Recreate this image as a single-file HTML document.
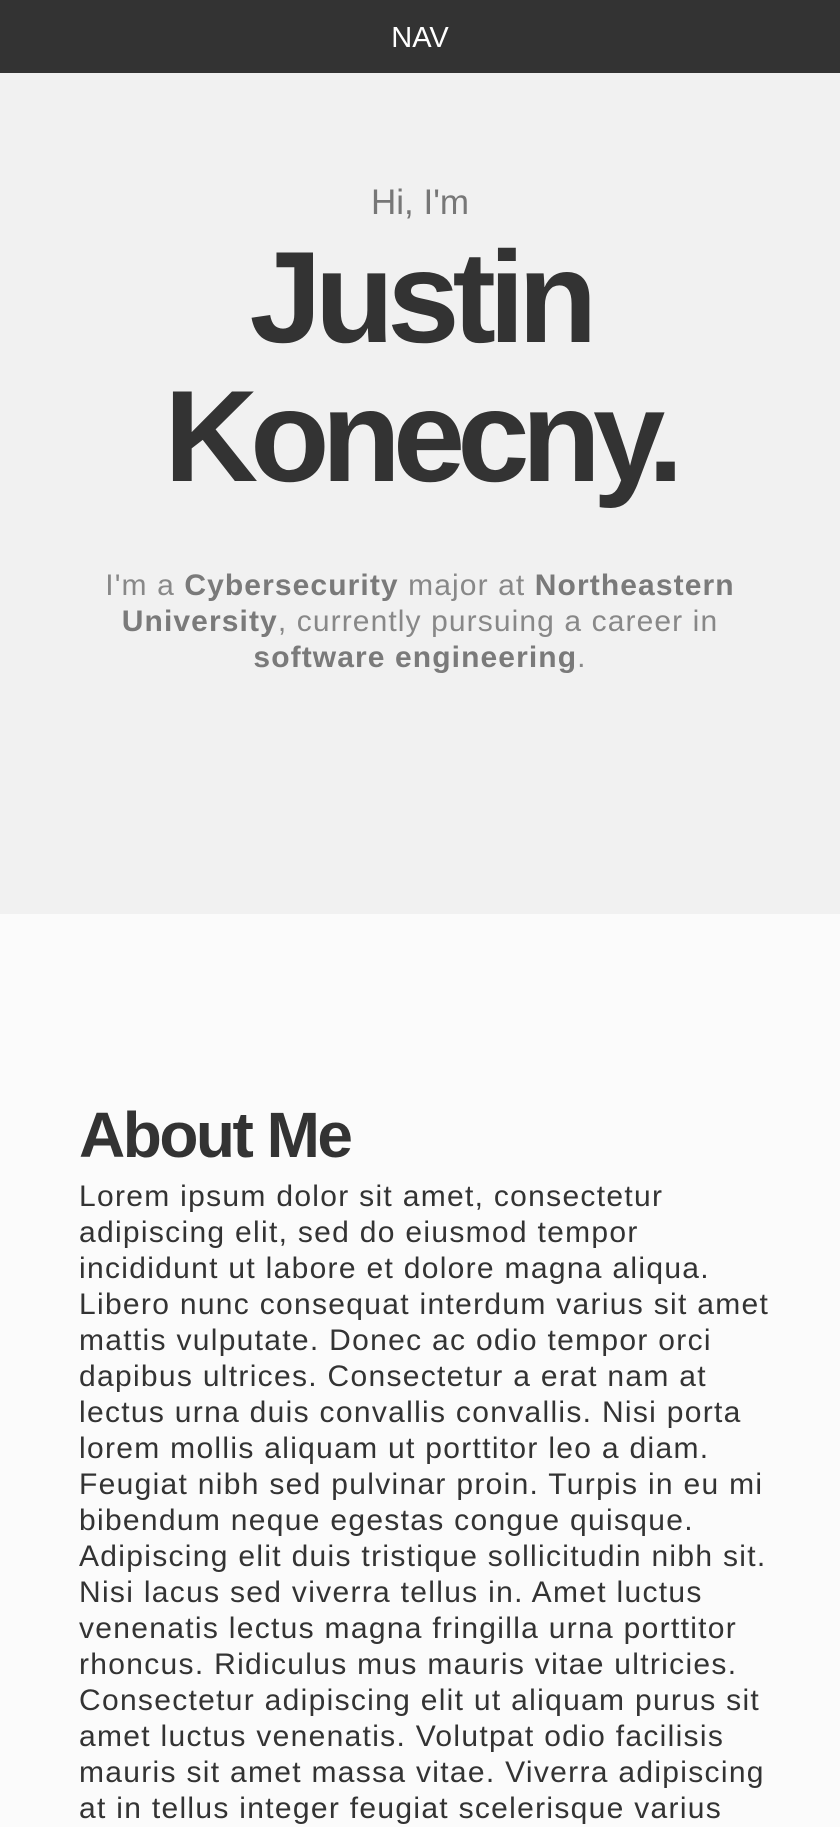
<!DOCTYPE html>
<html><head><meta charset="utf-8"><style>
*{margin:0;padding:0;box-sizing:border-box}
body{width:840px;height:1818px;overflow:hidden;background:#fbfbfb;font-family:"Liberation Sans",sans-serif;position:relative}
.nav{position:absolute;left:0;top:0;width:840px;height:73px;background:#333}
.a{position:absolute;left:0;width:840px;text-align:center;white-space:nowrap}
.hero{position:absolute;left:0;top:73px;width:840px;height:841px;background:#f1f1f1}
b{font-weight:bold;color:#7a7a7a}
.body{position:absolute;left:79px;top:1179px;font-size:30px;line-height:36px;color:#333;white-space:nowrap;letter-spacing:1.3px}
</style></head><body>
<div class="nav"></div>
<div class="a" style="top:24px;font-size:29px;line-height:29px;color:#fff">NAV</div>
<div class="hero"></div>
<div class="a" style="top:185px;font-size:35px;line-height:35px;color:#777">Hi, I'm</div>
<div class="a" style="top:232px;font-size:130px;line-height:130px;font-weight:bold;color:#333;letter-spacing:-7px">Justin</div>
<div class="a" style="top:371px;font-size:130px;line-height:130px;font-weight:bold;color:#333;letter-spacing:-8px">Konecny.</div>
<div class="a" style="top:568px;font-size:30px;line-height:36px;color:#888;letter-spacing:1.1px">I'm a <b>Cybersecurity</b> major at <b>Northeastern</b><br><b>University</b>, currently pursuing a career in<br><b>software engineering</b>.</div>
<div style="position:absolute;left:79px;top:1103px;font-size:64px;line-height:64px;font-weight:bold;color:#333;letter-spacing:-2.5px">About Me</div>
<div class="body">Lorem ipsum dolor sit amet, consectetur<br>adipiscing elit, sed do eiusmod tempor<br>incididunt ut labore et dolore magna aliqua.<br>Libero nunc consequat interdum varius sit amet<br>mattis vulputate. Donec ac odio tempor orci<br>dapibus ultrices. Consectetur a erat nam at<br>lectus urna duis convallis convallis. Nisi porta<br>lorem mollis aliquam ut porttitor leo a diam.<br>Feugiat nibh sed pulvinar proin. Turpis in eu mi<br>bibendum neque egestas congue quisque.<br>Adipiscing elit duis tristique sollicitudin nibh sit.<br>Nisi lacus sed viverra tellus in. Amet luctus<br>venenatis lectus magna fringilla urna porttitor<br>rhoncus. Ridiculus mus mauris vitae ultricies.<br>Consectetur adipiscing elit ut aliquam purus sit<br>amet luctus venenatis. Volutpat odio facilisis<br>mauris sit amet massa vitae. Viverra adipiscing<br>at in tellus integer feugiat scelerisque varius</div>
</body></html>
